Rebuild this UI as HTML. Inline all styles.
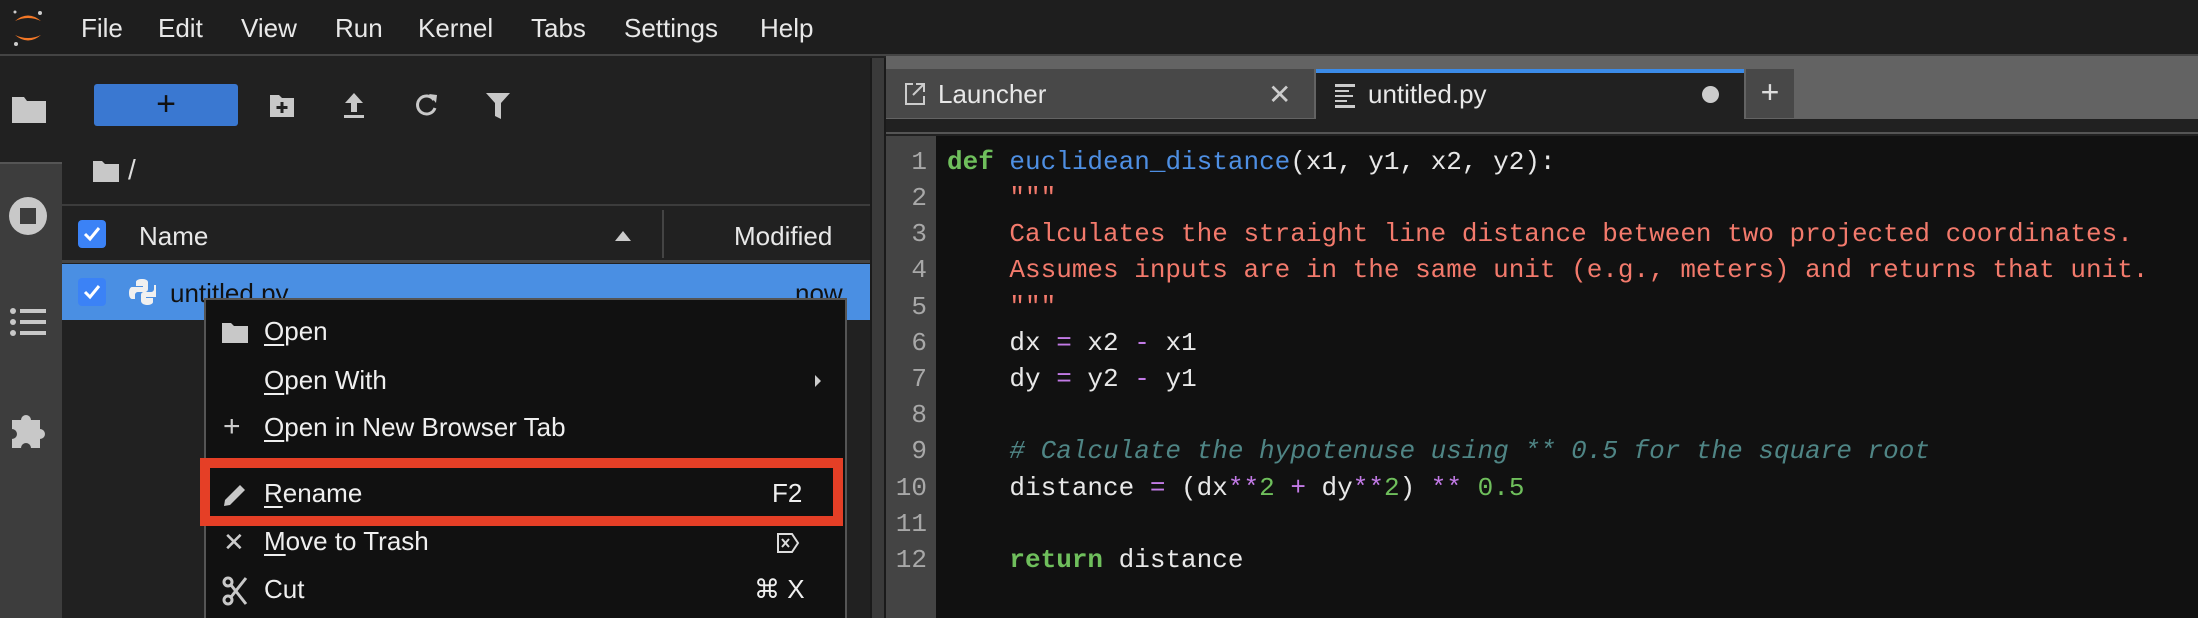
<!DOCTYPE html>
<html style="overflow:hidden;width:2198px;height:618px"><head><meta charset="utf-8"><style>
*{margin:0;padding:0;box-sizing:border-box}
body{width:2198px;height:618px;overflow:hidden;background:#212121;font-family:"Liberation Sans",sans-serif;color:#e6e6e6;position:relative}
.a{position:absolute}
.menu span{position:absolute;top:13px;font-size:26px;color:#e8e8e8}
.mono{font-family:"Liberation Mono",monospace}
.code div{position:absolute;left:947px;font-size:26px;white-space:pre;color:#e8e8e8;line-height:36px}
.ln div{position:absolute;right:0;font-size:26px;color:#a8a8a8;line-height:36px}
.cm{font-size:26px;color:#efefef}
.cm .it{position:absolute;left:264px}
u{text-decoration:underline;text-underline-offset:4px}
</style></head><body>
<div class="a" style="left:0;top:0;width:2198px;height:56px;background:#1e1e1e;border-bottom:2px solid #444"></div>
<svg class="a" style="left:10px;top:8px" width="36" height="40" viewBox="0 0 36 40">
<path d="M5 13 Q18 2 31 13 Q18 7 5 13Z" fill="#f37726"/><path d="M5 27 Q18 38 31 27 Q18 33 5 27Z" fill="#f37726"/>
<circle cx="6" cy="36" r="2" fill="#ccc"/><circle cx="30" cy="5" r="2" fill="#ccc"/><circle cx="5" cy="4" r="1.5" fill="#ccc"/></svg>
<div class="menu"><span style="left:81px">File</span><span style="left:158px">Edit</span><span style="left:241px">View</span><span style="left:335px">Run</span><span style="left:418px">Kernel</span><span style="left:531px">Tabs</span><span style="left:624px">Settings</span><span style="left:760px">Help</span></div>
<div class="a" style="left:0;top:58px;width:62px;height:104px;background:#212121"></div>
<div class="a" style="left:0;top:162px;width:62px;height:456px;background:#3d3d3d;border-top:2px solid #555"></div>
<svg class="a" style="left:11px;top:94px" width="36" height="30" viewBox="0 0 36 30"><path d="M1 3h12l3 4h19v22H1z" fill="#c8c8c8"/></svg>
<svg class="a" style="left:8px;top:196px" width="40" height="40" viewBox="0 0 40 40"><circle cx="20" cy="20" r="19" fill="#c8c8c8"/><rect x="12" y="12" width="16" height="16" fill="#3d3d3d"/></svg>
<svg class="a" style="left:10px;top:308px" width="36" height="28" viewBox="0 0 36 28"><g fill="#c8c8c8"><circle cx="3" cy="3" r="3"/><circle cx="3" cy="14" r="3"/><circle cx="3" cy="25" r="3"/><rect x="10" y="1" width="26" height="4"/><rect x="10" y="12" width="26" height="4"/><rect x="10" y="23" width="26" height="4"/></g></svg>
<svg class="a" style="left:10px;top:410px" width="38" height="38" viewBox="0 0 38 38"><path d="M2 10h9a5 5 0 0 1 10 0h9v9a5 5 0 0 1 0 10v9h-9a5 5 0 0 0-10 0H2v-9a5 5 0 0 0 0-10z" fill="#c8c8c8"/></svg>
<div class="a" style="left:94px;top:84px;width:144px;height:42px;background:#3a78d1;border-radius:3px;color:#111;font-size:34px;text-align:center;line-height:40px">+</div>
<svg class="a" style="left:269px;top:92px" width="26" height="26" viewBox="0 0 26 26"><path d="M1 3h9l3 3h12v19H1z" fill="#c8c8c8"/><path d="M13 10v11M7.5 15.5h11" stroke="#212121" stroke-width="3"/></svg>
<svg class="a" style="left:342px;top:92px" width="24" height="26" viewBox="0 0 24 26"><path d="M12 1L3 11h6v9h6v-9h6z M2 23h20v3H2z" fill="#c8c8c8"/></svg>
<svg class="a" style="left:413px;top:91px" width="26" height="28" viewBox="0 0 26 28"><path d="M21 9A9 9 0 1 0 22 17" stroke="#c8c8c8" stroke-width="3" fill="none"/><path d="M16 3l8 1-1 8z" fill="#c8c8c8"/></svg>
<svg class="a" style="left:485px;top:92px" width="26" height="28" viewBox="0 0 26 28"><path d="M1 1h24l-9 10v16l-6-3V11z" fill="#c8c8c8"/></svg>
<svg class="a" style="left:92px;top:160px" width="28" height="22" viewBox="0 0 28 22"><path d="M1 1h9l3 3h14v18H1z" fill="#c8c8c8"/></svg>
<div class="a" style="left:128px;top:154px;font-size:28px;color:#ddd">/</div>
<div class="a" style="left:62px;top:204px;width:808px;height:2px;background:#3c3c3c"></div>
<div class="a" style="left:62px;top:260px;width:808px;height:3px;background:#444"></div>
<div class="a" style="left:78px;top:220px;width:28px;height:28px;background:#3b82f6;border-radius:4px"></div>
<svg class="a" style="left:80px;top:222px" width="24" height="24" viewBox="0 0 24 24"><path d="M5 12l5 5 9-11" stroke="#fff" stroke-width="3" fill="none"/></svg>
<div class="a" style="left:139px;top:221px;font-size:26px;color:#e8e8e8">Name</div>
<svg class="a" style="left:614px;top:230px" width="18" height="12"><path d="M1 11L9 1l8 10z" fill="#ccc"/></svg>
<div class="a" style="left:662px;top:210px;width:2px;height:48px;background:#444"></div>
<div class="a" style="left:734px;top:221px;font-size:26px;color:#e8e8e8">Modified</div>
<div class="a" style="left:62px;top:264px;width:808px;height:56px;background:#4a8fe3"></div>
<div class="a" style="left:78px;top:278px;width:28px;height:28px;background:#3b82f6;border-radius:4px"></div>
<svg class="a" style="left:80px;top:280px" width="24" height="24" viewBox="0 0 24 24"><path d="M5 12l5 5 9-11" stroke="#fff" stroke-width="3" fill="none"/></svg>
<svg class="a" style="left:128px;top:278px" width="28" height="28" viewBox="0 0 28 28"><path d="M14 1c-6 0-6 3-6 3v4h7v1H4s-3 0-3 6 3 6 3 6h3v-4s0-3 3-3h7s3 0 3-3V4s0-3-6-3z M19 27c6 0 6-3 6-3v-4h-7v-1h10s3 0 3-6-3-6-3-6h-2v4s0 3-3 3h-7s-3 0-3 3v6s0 4 7 4z" fill="#f0f0f0"/></svg>
<div class="a" style="left:170px;top:278px;font-size:26px;color:#111">untitled.py</div>
<div class="a" style="left:795px;top:278px;font-size:26px;color:#111">now</div>
<div class="a" style="left:870px;top:58px;width:16px;height:560px;background:#3a3a3a;border-left:2px solid #1a1a1a;border-right:2px solid #1a1a1a"></div>
<div class="a" style="left:886px;top:56px;width:1312px;height:63px;background:#636363"></div>
<div class="a" style="left:886px;top:69px;width:428px;height:49px;background:#484848"></div>
<svg class="a" style="left:904px;top:82px" width="22" height="24" viewBox="0 0 22 24"><path d="M9 2H2v20h18v-8" stroke="#ccc" stroke-width="2" fill="none"/><path d="M12 2h8v8M20 2L9 13" stroke="#ccc" stroke-width="2" fill="none"/></svg>
<div class="a" style="left:938px;top:79px;font-size:26px;color:#e8e8e8">Launcher</div>
<div class="a" style="left:1268px;top:78px;font-size:28px;color:#ccc">✕</div>
<div class="a" style="left:1316px;top:69px;width:428px;height:50px;background:#212121;border-top:4px solid #3b8be8"></div>
<svg class="a" style="left:1335px;top:84px" width="20" height="24" viewBox="0 0 20 24"><g fill="#ccc"><rect x="0" y="0" width="20" height="3"/><rect x="0" y="6" width="14" height="2"/><rect x="0" y="11" width="18" height="2"/><rect x="0" y="16" width="12" height="2"/><rect x="0" y="21" width="20" height="3"/></g></svg>
<div class="a" style="left:1368px;top:79px;font-size:26px;color:#e8e8e8">untitled.py</div>
<div class="a" style="left:1702px;top:86px;width:17px;height:17px;border-radius:50%;background:#ccc"></div>
<div class="a" style="left:1746px;top:69px;width:48px;height:49px;background:#484848;color:#ddd;font-size:32px;text-align:center;line-height:46px">+</div>
<div class="a" style="left:886px;top:119px;width:1312px;height:15px;background:#212121;border-bottom:2px solid #555"></div>
<div class="a" style="left:886px;top:136px;width:50px;height:482px;background:#444"></div>
<div class="a" style="left:936px;top:136px;width:1262px;height:482px;background:#111"></div>
<div class="a ln mono" style="left:886px;top:0;width:41px;height:618px">
<div style="top:144px">1</div><div style="top:180px">2</div><div style="top:216px">3</div><div style="top:252px">4</div><div style="top:289px">5</div><div style="top:325px">6</div><div style="top:361px">7</div><div style="top:397px">8</div><div style="top:433px">9</div><div style="top:470px">10</div><div style="top:506px">11</div><div style="top:542px">12</div></div>
<div class="code mono">
<div style="top:144px"><span style="color:#6fbf5c;font-weight:bold">def</span> <span style="color:#4e8fe3">euclidean_distance</span>(x1, y1, x2, y2):</div>
<div style="top:180px;color:#f37a6c">    """</div>
<div style="top:216px;color:#f37a6c">    Calculates the straight line distance between two projected coordinates.</div>
<div style="top:252px;color:#f37a6c">    Assumes inputs are in the same unit (e.g., meters) and returns that unit.</div>
<div style="top:289px;color:#f37a6c">    """</div>
<div style="top:325px">    dx <span style="color:#c27ae6">=</span> x2 <span style="color:#c27ae6">-</span> x1</div>
<div style="top:361px">    dy <span style="color:#c27ae6">=</span> y2 <span style="color:#c27ae6">-</span> y1</div>
<div style="top:433px;color:#4f8585;font-style:italic">    # Calculate the hypotenuse using ** 0.5 for the square root</div>
<div style="top:470px">    distance <span style="color:#c27ae6">=</span> (dx<span style="color:#c27ae6">**</span><span style="color:#6fbf5c">2</span> <span style="color:#c27ae6">+</span> dy<span style="color:#c27ae6">**</span><span style="color:#6fbf5c">2</span>) <span style="color:#c27ae6">**</span> <span style="color:#6fbf5c">0.5</span></div>
<div style="top:542px">    <span style="color:#6fbf5c;font-weight:bold">return</span> distance</div>
</div>
<div class="a cm" style="left:204px;top:298px;width:643px;height:320px;background:#111;border:2px solid #555;border-bottom:none"></div>
<div class="a cm" style="left:0;top:0;width:2198px;height:618px">
<svg class="a" style="left:222px;top:321px" width="26" height="22" viewBox="0 0 26 22"><path d="M0 2h9l3 3h14v17H0z" fill="#c8c8c8"/></svg>
<div class="it" style="top:316px"><u>O</u>pen</div>
<div class="it" style="top:365px"><u>O</u>pen With</div>
<svg class="a" style="left:814px;top:374px" width="8" height="14"><path d="M1 1l6 6-6 6z" fill="#ccc"/></svg>
<div class="a" style="left:223px;top:410px;font-size:30px;color:#ccc">+</div>
<div class="it" style="top:412px"><u>O</u>pen in New Browser Tab</div>
<div class="a" style="left:200px;top:458px;width:643px;height:68px;border:10px solid #e53f26"></div>
<svg class="a" style="left:222px;top:482px" width="26" height="26" viewBox="0 0 26 26"><path d="M2 24l1-6L18 3l5 5L8 23z" fill="#c8c8c8"/></svg>
<div class="it" style="top:478px"><u>R</u>ename</div>
<div class="a" style="left:772px;top:478px">F2</div>
<div class="a" style="left:223px;top:527px;font-size:26px;color:#ccc">✕</div>
<div class="it" style="top:526px"><u>M</u>ove to Trash</div>
<svg class="a" style="left:776px;top:532px" width="24" height="22" viewBox="0 0 24 22"><path d="M2 2h14l6 9-6 9H2z" stroke="#ddd" stroke-width="2" fill="none"/><path d="M6 7l7 8M13 7l-7 8" stroke="#ddd" stroke-width="2"/></svg>
<svg class="a" style="left:222px;top:576px" width="26" height="30" viewBox="0 0 26 30"><circle cx="6" cy="24" r="4" stroke="#c8c8c8" stroke-width="3" fill="none"/><circle cx="6" cy="6" r="4" stroke="#c8c8c8" stroke-width="3" fill="none"/><path d="M9 9l15 19M9 21L24 2" stroke="#c8c8c8" stroke-width="3"/></svg>
<div class="it" style="top:574px">Cut</div>
<div class="a" style="left:754px;top:574px">⌘ X</div>
</div>
</body></html>
